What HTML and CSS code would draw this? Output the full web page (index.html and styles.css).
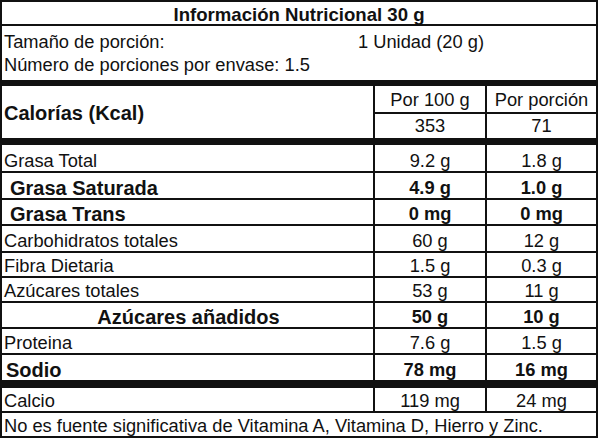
FILE: index.html
```html
<!DOCTYPE html>
<html lang="es">
<head>
<meta charset="utf-8">
<title>Información Nutricional</title>
<link rel="stylesheet" href="styles.css">
</head>
<body>
<div class="label">
  <div class="title">Información Nutricional 30 g</div>
  <div class="serving">
    <div class="serving-line"><span class="serving-name">Tamaño de porción:</span><span>1 Unidad (20 g)</span></div>
    <div class="serving-line">Número de porciones por envase: 1.5</div>
  </div>
  <div class="head">
    <div class="cal">Calorías (Kcal)</div>
    <div class="hcell c2 top">Por 100 g</div>
    <div class="hcell c3 top">Por porción</div>
    <div class="hcell c2">353</div>
    <div class="hcell c3">71</div>
  </div>
  <div class="row r28"><div class="name">Grasa Total</div><div class="val">9.2 g</div><div class="val last">1.8 g</div></div>
  <div class="row r27 bold"><div class="name big indent">Grasa Saturada</div><div class="val">4.9 g</div><div class="val last">1.0 g</div></div>
  <div class="row r26 bold"><div class="name big indent">Grasa Trans</div><div class="val">0 mg</div><div class="val last">0 mg</div></div>
  <div class="row r27"><div class="name">Carbohidratos totales</div><div class="val">60 g</div><div class="val last">12 g</div></div>
  <div class="row r25"><div class="name">Fibra Dietaria</div><div class="val">1.5 g</div><div class="val last">0.3 g</div></div>
  <div class="row r25"><div class="name">Azúcares totales</div><div class="val">53 g</div><div class="val last">11 g</div></div>
  <div class="row r26 bold"><div class="name big center">Azúcares añadidos</div><div class="val">50 g</div><div class="val last">10 g</div></div>
  <div class="row r26"><div class="name">Proteina</div><div class="val">7.6 g</div><div class="val last">1.5 g</div></div>
  <div class="row r33 bold thick"><div class="name big small-indent">Sodio</div><div class="val">78 mg</div><div class="val last">16 mg</div></div>
  <div class="row r25"><div class="name">Calcio</div><div class="val">119 mg</div><div class="val last">24 mg</div></div>
  <div class="foot">No es fuente significativa de Vitamina A, Vitamina D, Hierro y Zinc.</div>
</div>
</body>
</html>
```

FILE: styles.css
```css
html, body {
  margin: 0;
  padding: 0;
  background: #fff;
}

body {
  font-family: "Liberation Sans", Arial, sans-serif;
  font-size: 18.3px;
  color: #111;
}

.label {
  width: 598px;
  border: 2px solid #111;
  box-sizing: border-box;
}

.title {
  height: 24px;
  border-bottom: 2px solid #111;
  box-sizing: border-box;
  display: flex;
  align-items: flex-end;
  justify-content: center;
  font-weight: bold;
  font-size: 18.6px;
  line-height: 18px;
}

.serving {
  height: 60px;
  border-bottom: 6px solid #111;
  box-sizing: border-box;
  padding: 4px 0 0 2px;
}

.serving-line {
  line-height: 23px;
  display: flex;
}

.serving-name {
  width: 354px;
}

.head {
  height: 59px;
  border-bottom: 7px solid #111;
  box-sizing: border-box;
  display: grid;
  grid-template-columns: 373px 112px 1fr;
  grid-template-rows: 28px 24px;
}

.cal {
  grid-row: 1 / 3;
  grid-column: 1;
  border-right: 2px solid #111;
  display: flex;
  align-items: center;
  padding: 2px 0 0 2px;
  font-weight: bold;
  font-size: 20px;
}

.hcell {
  display: flex;
  align-items: flex-end;
  justify-content: center;
  line-height: 18px;
  padding-bottom: 3px;
  box-sizing: border-box;
}

.hcell.c2 {
  border-right: 2px solid #111;
}

.hcell.top {
  border-bottom: 2px solid #111;
}

.row {
  display: grid;
  grid-template-columns: 373px 112px 1fr;
  border-bottom: 2px solid #111;
  box-sizing: border-box;
  line-height: 18px;
}

.row.thick {
  border-bottom-width: 8px;
}

.r25 { height: 25px; }
.r26 { height: 26px; }
.r27 { height: 27px; }
.r28 { height: 28px; }
.r33 { height: 33px; }

.row > div {
  display: flex;
  align-items: flex-end;
  padding-bottom: 1px;
}

.name {
  border-right: 2px solid #111;
  padding-left: 2px;
}

.name.big {
  font-size: 20px;
}

.name.indent {
  padding-left: 8px;
}

.name.small-indent {
  padding-left: 4px;
}

.name.center {
  justify-content: center;
}

.val {
  justify-content: center;
  border-right: 2px solid #111;
}

.val.last {
  border-right: 0;
}

.bold {
  font-weight: bold;
}

.foot {
  height: 23px;
  display: flex;
  align-items: flex-end;
  padding: 0 0 1px 2px;
  box-sizing: border-box;
  line-height: 18px;
}
```
